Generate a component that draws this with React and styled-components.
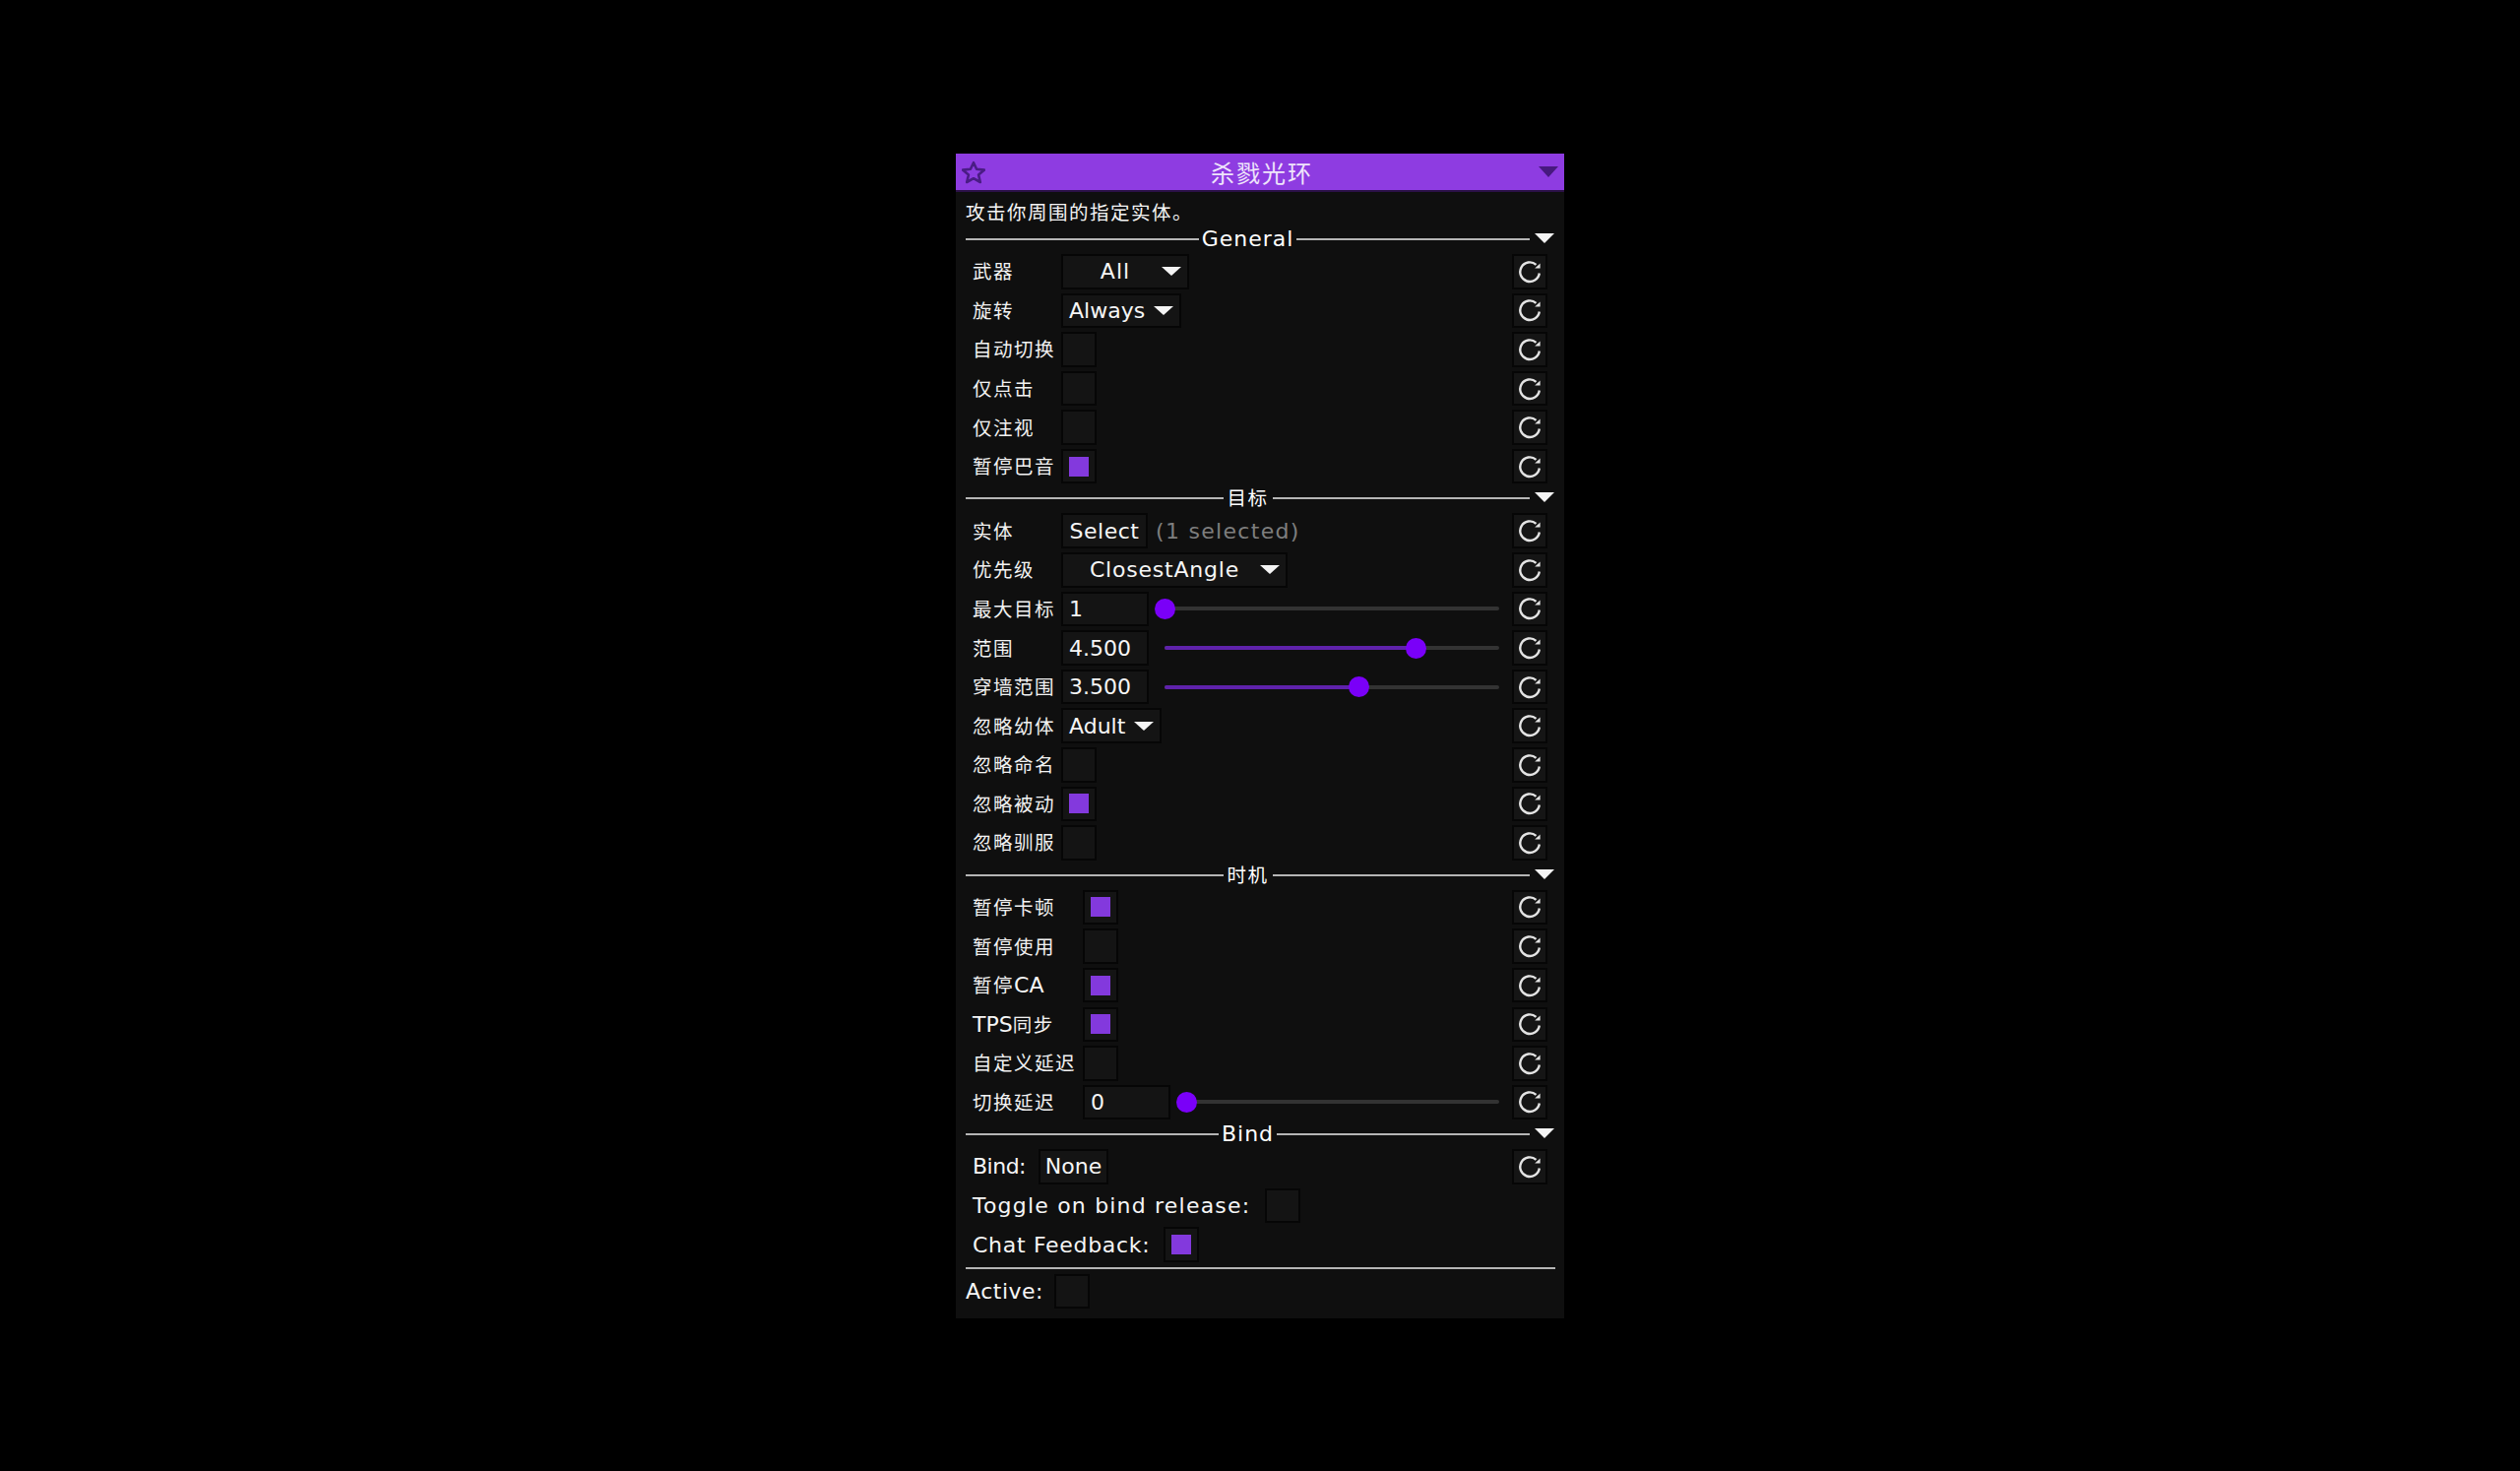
import React from "react";
import styled, { createGlobalStyle } from "styled-components";

const Global = createGlobalStyle`
  html, body { margin: 0; padding: 0; background: #000; }
  body { min-height: 1494px; }
`;

const Page = styled.div`
  display: flex;
  justify-content: center;
  padding-top: 156px;
`;

const Panel = styled.div`
  width: 618px;
  height: 1183px;
  background: #0f0f0f;
  color: #fff;
  font-family: "Noto Sans CJK SC", sans-serif;
`;

const Header = styled.div`
  height: 37px;
  background: #8e3ce1;
  border-bottom: 2px solid #2b1147;
  display: flex;
  align-items: center;
  justify-content: space-between;
  padding: 0 6px;
`;

const Title = styled.div`
  flex: 1;
  text-align: center;
  font-size: 24px;
  letter-spacing: 2px;
  line-height: 35px;
  color: #efe4fb;
`;

const Body = styled.div`
  padding: 0 9px 0 10px;
`;

const Description = styled.div`
  height: 38px;
  line-height: 39px;
  font-size: 19.5px;
  letter-spacing: 1.5px;
  color: #f4f4f4;
`;

const SectionHead = styled.div`
  height: 20px;
  margin-bottom: 5px;
  display: flex;
  align-items: center;
  padding-right: 1px;
`;

const SectionLine = styled.div`
  flex: 1;
  height: 2px;
  background: #b5b5b5;
`;

const SectionTitle = styled.div`
  padding: 0 ${(p) => (p.$latin ? 3 : 4)}px;
  font-family: ${(p) => (p.$latin ? '"DejaVu Sans", sans-serif' : '"Noto Sans CJK SC", sans-serif')};
  font-size: ${(p) => (p.$latin ? 22 : 19.5)}px;
  letter-spacing: ${(p) => (p.$latin ? 1 : 1.5)}px;
  line-height: ${(p) => (p.$latin ? 20 : 17)}px;
  height: 20px;
`;

const Caret = styled.svg`
  display: block;
  flex: none;
  width: ${(p) => p.$w}px;
  height: ${(p) => p.$h}px;
  fill: ${(p) => p.$color};
`;

const SectionCaret = styled(Caret)`
  margin: -2px 0 0 5px;
`;

const Section = styled.div`
  padding-bottom: 5px;
`;

const Rows = styled.div`
  display: flex;
  flex-direction: column;
  gap: 4.1px;
  padding: 0 8px 0 7px;
`;

const Row = styled.div`
  height: 35.5px;
  display: flex;
  align-items: center;
`;

const Label = styled.div`
  width: ${(p) => p.$w}px;
  flex: none;
  font-size: 19.5px;
  letter-spacing: 1.5px;
  line-height: 34px;
  height: 35px;
  white-space: nowrap;
  color: #f2f2f2;
`;

const Latin = styled.span`
  font-family: "DejaVu Sans", sans-serif;
  font-size: 22px;
  letter-spacing: ${(p) => p.$track ?? 1}px;
  color: #f6f6f6;
`;

const LatinLabel = styled(Latin)`
  flex: none;
  width: ${(p) => p.$w}px;
  white-space: nowrap;
`;

const Box = styled.div`
  box-sizing: border-box;
  height: 35.5px;
  flex: none;
  background: #141414;
  border: 2px solid #060606;
  display: flex;
  align-items: center;
`;

const Dropdown = styled(Box)`
  width: ${(p) => p.$w}px;
  padding: 0 6px;
`;

const DropText = styled(Latin)`
  flex: 1;
  text-align: ${(p) => (p.$left ? "left" : "center")};
  white-space: nowrap;
`;

const Check = styled(Box)`
  width: 36px;
  justify-content: center;
`;

const CheckFill = styled.div`
  width: 20px;
  height: 20px;
  background: #8339dd;
`;

const Button = styled(Box)`
  width: ${(p) => p.$w}px;
  justify-content: center;
`;

const Muted = styled(Latin)`
  margin-left: 8px;
  color: #7e7e7e;
`;

const Input = styled(Box)`
  width: 89px;
  padding-left: 6px;
`;

const Slider = styled.div`
  flex: 1;
  height: 21px;
  margin: 0 13px 0 16px;
  position: relative;
  display: flex;
  align-items: center;
`;

const Track = styled.div`
  width: 100%;
  height: 4px;
  background: #333;
  border-radius: 2px;
  overflow: hidden;
`;

const TrackFill = styled.div`
  height: 100%;
  background: #5f22ab;
`;

const Knob = styled.div`
  position: absolute;
  top: 0;
  width: 21px;
  height: 21px;
  margin-left: -10.5px;
  border-radius: 50%;
  background: #7a00f8;
`;

const Spacer = styled.div`
  flex: 1;
`;

const Reset = styled(Box)`
  width: 36px;
  justify-content: center;
  background: #151515;
`;

const ResetGlyph = styled.svg`
  width: 24px;
  height: 24px;
  display: block;
  fill: none;
  stroke: #e4e4e4;
  stroke-width: 2.4;
`;

const Divider = styled.div`
  height: 2px;
  background: #b5b5b5;
`;

const Footer = styled.div`
  display: flex;
  align-items: center;
  height: 35.5px;
  margin-top: 5px;
`;

const ArrowDown = ({ $w, $h, $color = "#f4f4f4", as: As = Caret }) => (
  <As viewBox="0 0 20 10" preserveAspectRatio="none" $w={$w} $h={$h} $color={$color}>
    <polygon points="0,0 20,0 10,10" />
  </As>
);

const ResetIcon = () => (
  <Reset>
    <ResetGlyph viewBox="0 0 24 24">
      <path d="M21.8 13.5A9.8 9.8 0 1 1 18.5 4.8" />
      <polygon points="17.2,8.6 22.6,8.6 22.6,3.4" fill="#e4e4e4" stroke="none" />
    </ResetGlyph>
  </Reset>
);

const StarIcon = () => (
  <svg width="24" height="24" viewBox="0 0 24 24" fill="none" stroke="#4a1c85" strokeWidth="2.6" strokeLinejoin="round">
    <polygon points="12,2.2 15.1,8.7 23,9.6 17.1,14.6 18.8,22 12,18.2 5.2,22 6.9,14.6 1,9.6 8.9,8.7" />
  </svg>
);

const Drop = ({ w, track, left, children }) => (
  <Dropdown $w={w}>
    <DropText $track={track} $left={left}>{children}</DropText>
    <ArrowDown $w={20} $h={9} />
  </Dropdown>
);

const SliderBar = ({ value }) => (
  <Slider>
    <Track>
      <TrackFill style={{ width: `${value * 100}%` }} />
    </Track>
    <Knob style={{ left: `${value * 100}%` }} />
  </Slider>
);

const SectionHeader = ({ title, latin }) => (
  <SectionHead>
    <SectionLine />
    <SectionTitle $latin={latin}>{title}</SectionTitle>
    <SectionLine />
    <ArrowDown as={SectionCaret} $w={20} $h={10} />
  </SectionHead>
);

const NumberSetting = ({ value, ratio }) => (
  <>
    <Input><Latin $track={0}>{value}</Latin></Input>
    <SliderBar value={ratio} />
  </>
);

const generalRows = [
  { label: "武器", control: <Drop w={130}>All</Drop> },
  { label: "旋转", control: <Drop w={122} track={0} left>Always</Drop> },
  { label: "自动切换", control: <Check /> },
  { label: "仅点击", control: <Check /> },
  { label: "仅注视", control: <Check /> },
  { label: "暂停巴音", control: <Check><CheckFill /></Check> },
];

const targetRows = [
  { label: "实体", control: <><Button $w={88}><Latin $track={0.5}>Select</Latin></Button><Muted $track={1.3}>(1 selected)</Muted></> },
  { label: "优先级", control: <Drop w={230} track={0.8}>ClosestAngle</Drop> },
  { label: "最大目标", control: <NumberSetting value="1" ratio={0} />, fill: true },
  { label: "范围", control: <NumberSetting value="4.500" ratio={0.75} />, fill: true },
  { label: "穿墙范围", control: <NumberSetting value="3.500" ratio={0.582} />, fill: true },
  { label: "忽略幼体", control: <Drop w={102} track={0} left>Adult</Drop> },
  { label: "忽略命名", control: <Check /> },
  { label: "忽略被动", control: <Check><CheckFill /></Check> },
  { label: "忽略驯服", control: <Check /> },
];

const timingRows = [
  { label: "暂停卡顿", control: <Check><CheckFill /></Check> },
  { label: "暂停使用", control: <Check /> },
  { label: <>暂停<Latin $track={0}>CA</Latin></>, control: <Check><CheckFill /></Check> },
  { label: <><Latin $track={0}>TPS</Latin>同步</>, control: <Check><CheckFill /></Check> },
  { label: "自定义延迟", control: <Check /> },
  { label: "切换延迟", control: <NumberSetting value="0" ratio={0} />, fill: true },
];

const SettingRows = ({ rows, labelWidth }) => (
  <Rows>
    {rows.map(({ label, control, fill }, i) => (
      <Row key={i}>
        <Label $w={labelWidth}>{label}</Label>
        {control}
        {!fill && <Spacer />}
        <ResetIcon />
      </Row>
    ))}
  </Rows>
);

export default function App() {
  return (
    <Page>
      <Global />
      <Panel>
        <Header>
          <StarIcon />
          <Title>杀戮光环</Title>
          <ArrowDown $w={20} $h={11} $color="#47197f" />
        </Header>
        <Body>
          <Description>攻击你周围的指定实体。</Description>
          <Section>
            <SectionHeader title="General" latin />
            <SettingRows rows={generalRows} labelWidth={90} />
          </Section>
          <Section>
            <SectionHeader title="目标" />
            <SettingRows rows={targetRows} labelWidth={90} />
          </Section>
          <Section>
            <SectionHeader title="时机" />
            <SettingRows rows={timingRows} labelWidth={112} />
          </Section>
          <Section>
            <SectionHeader title="Bind" latin />
            <Rows>
              <Row>
                <LatinLabel $w={67} $track={-0.5}>Bind:</LatinLabel>
                <Button $w={71}><Latin $track={0}>None</Latin></Button>
                <Spacer />
                <ResetIcon />
              </Row>
              <Row>
                <LatinLabel $w={297} $track={1.2}>Toggle on bind release:</LatinLabel>
                <Check />
              </Row>
              <Row>
                <LatinLabel $w={194} $track={0.7}>Chat Feedback:</LatinLabel>
                <Check><CheckFill /></Check>
              </Row>
            </Rows>
          </Section>
          <Divider />
          <Footer>
            <LatinLabel $w={90} $track={0.5}>Active:</LatinLabel>
            <Check />
          </Footer>
        </Body>
      </Panel>
    </Page>
  );
}
